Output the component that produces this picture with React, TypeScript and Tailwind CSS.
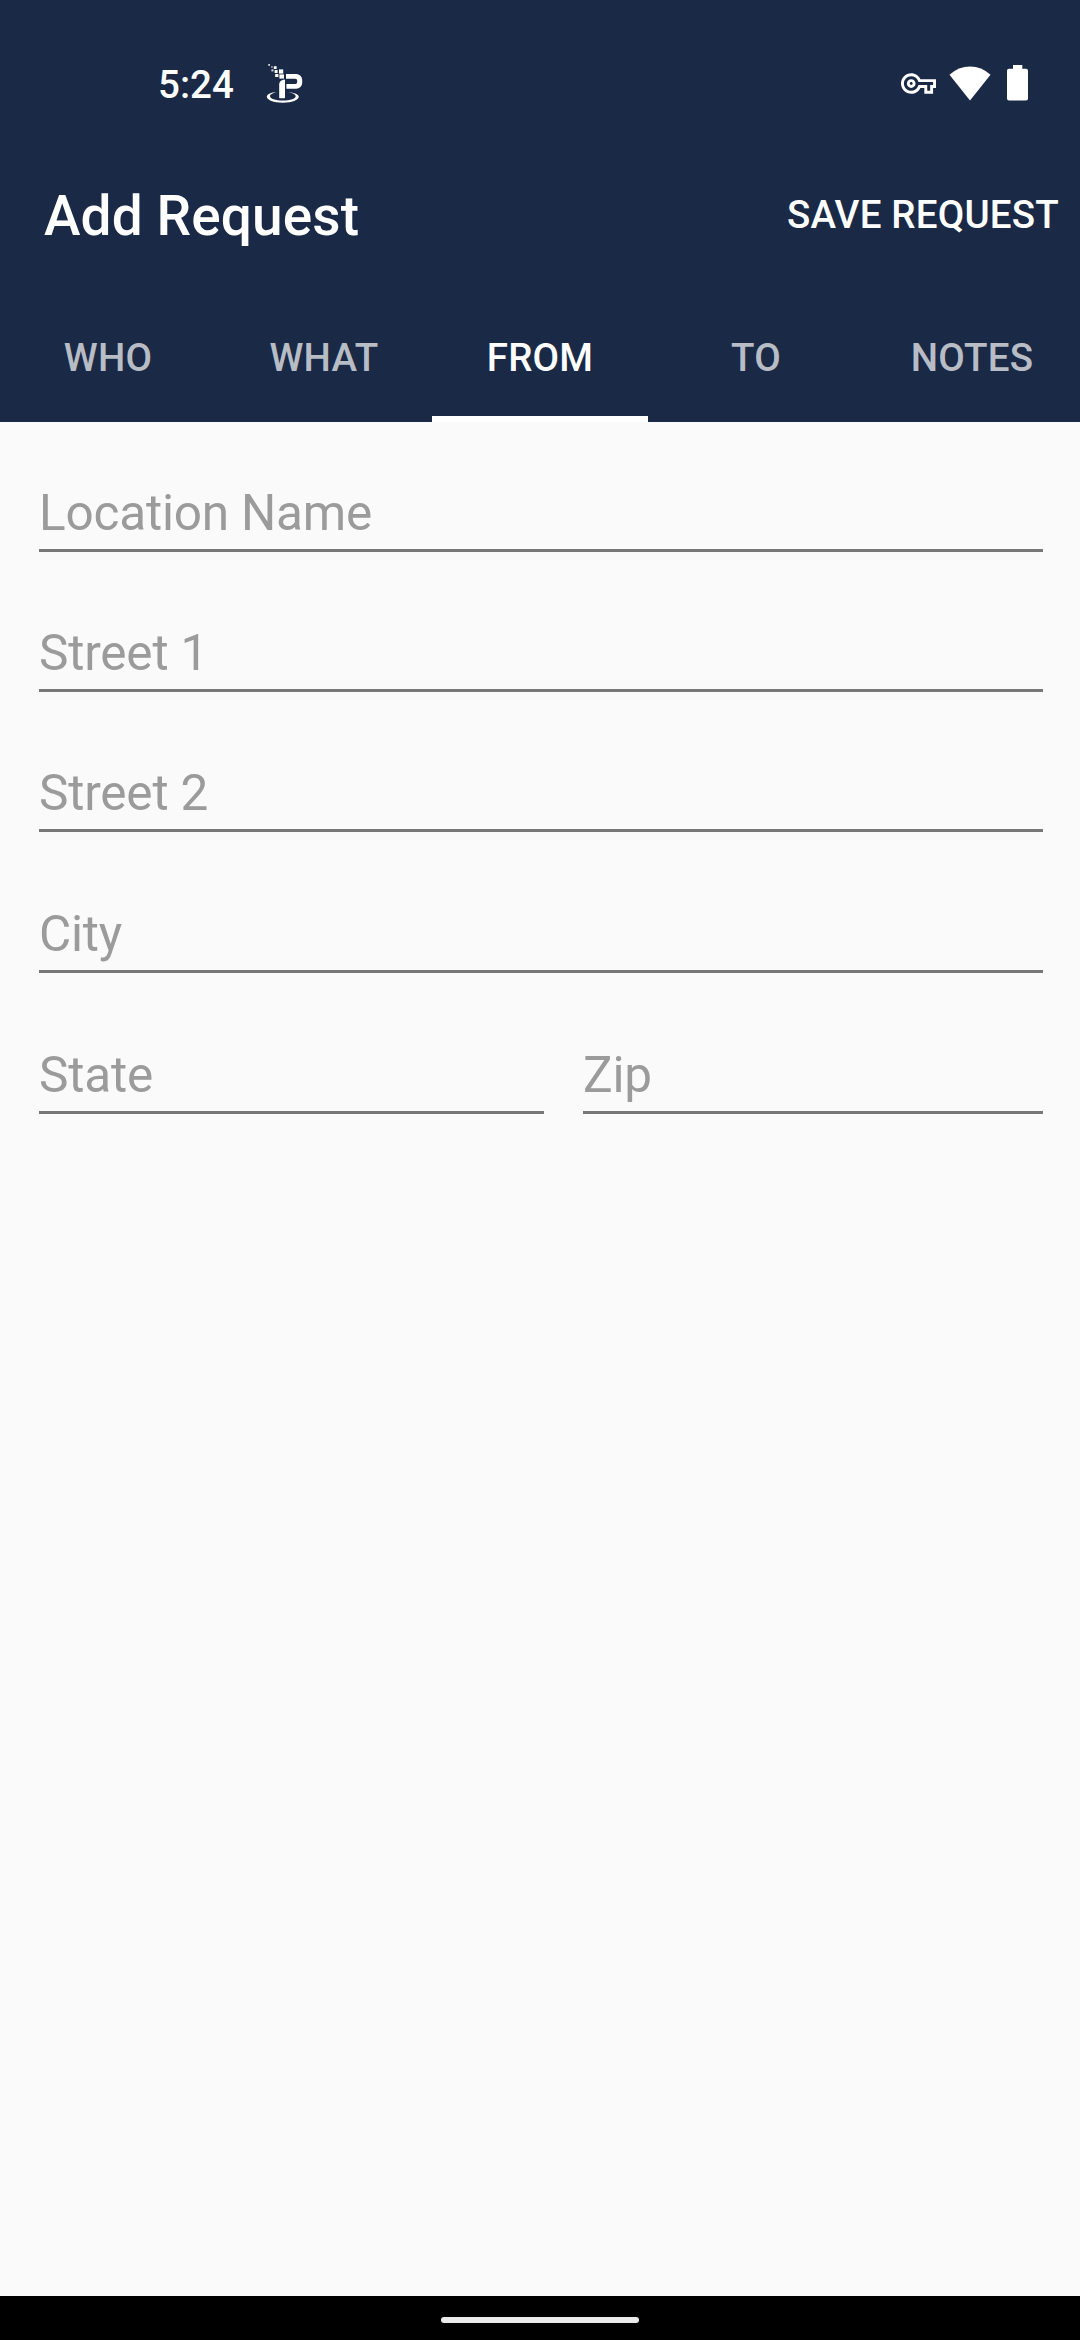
import { useState } from 'react';
import clsx from 'clsx';

const TABS = ['WHO', 'WHAT', 'FROM', 'TO', 'NOTES'];

function AppLogoIcon() {
  return (
    <svg width="38" height="42" viewBox="0 0 38 42" fill="white" className="shrink-0">
      <rect x="2.2" y="2" width="1.8" height="1.8" opacity="0.8" />
      <rect x="5" y="4" width="1.8" height="1.8" opacity="0.5" />
      <rect x="7.8" y="4.2" width="2.8" height="2.8" />
      <rect x="5.4" y="7.4" width="2" height="2" opacity="0.85" />
      <rect x="8.6" y="8" width="3" height="3" />
      <rect x="13" y="7.4" width="4.2" height="4.2" />
      <rect x="9.2" y="12" width="3.2" height="3" />
      <rect x="13.4" y="12.4" width="4.6" height="4.2" />
      <path d="M20 12h10.200a6 6 0 0 1 6 6v2.800a6 6 0 0 1-6 6H20.400v-4.800H29.200a2 2 0 0 0 2-2v-1.200a2 2 0 0 0-2-2H20z" />
      <path d="M13.200 22.500q0-4.500 5.800-5V36q-2.900.6-5.800 0z" />
      <path d="M11.500 30C4.500 30.500.8 32.400.8 34.800c0 3.300 7 5.900 16 5.900s16-2.600 16-5.900c0-2.400-4-4.400-11.400-4.900 5 .9 8.300 2.400 8.300 4.300 0 2.400-5.400 4.300-12.800 4.300S4 36.600 4 34.200c0-1.900 3-3.400 7.500-4.200z" />
    </svg>
  );
}

function StatusBar() {
  return (
    <div className="flex h-[136px] items-start justify-between pt-[62px] pr-[52px] pl-[158px]">
      <div className="flex items-start">
        <span className="w-[108px] text-[38.5px] leading-[46px] font-medium">5:24</span>
        <AppLogoIcon />
      </div>
      <div className="flex h-[42px] items-center">
        <svg width="35" height="21" viewBox="0 5 24 14" fill="white" className="mr-[13px]">
          <path d="M22 19h-6v-4h-2.68c-1.14 2.42-3.6 4-6.32 4-3.86 0-7-3.14-7-7s3.14-7 7-7c2.72 0 5.17 1.58 6.32 4H24v6h-2v4zm-4-2h2v-4h2v-2H11.94l-.23-.67C11.01 8.34 9.11 7 7 7c-2.76 0-5 2.24-5 5s2.24 5 5 5c2.11 0 4.01-1.34 4.71-3.33l.23-.67H18v4zM7 15c-1.65 0-3-1.35-3-3s1.35-3 3-3 3 1.35 3 3-1.35 3-3 3zm0-4c-.55 0-1 .45-1 1s.45 1 1 1 1-.45 1-1-.45-1-1-1z" />
        </svg>
        <svg width="42" height="35" viewBox="0 0 42 35" fill="white" className="mr-4">
          <path d="M.5 8.800Q9.500.5 21 .5t20.500 8.300L21 34.500z" />
        </svg>
        <svg width="21" height="36" viewBox="0 0 21 36" fill="white">
          <path d="M6 0h9.300v3.800H19a2 2 0 0 1 2 2v27.800a2 2 0 0 1-2 2H2a2 2 0 0 1-2-2V5.800a2 2 0 0 1 2-2h4z" />
        </svg>
      </div>
    </div>
  );
}

interface FieldProps {
  label: string;
  className?: string;
}

function Field({ label, className }: FieldProps) {
  return (
    <input
      type="text"
      placeholder={label}
      aria-label={label}
      className={clsx(
        'h-[93px] min-w-0 rounded-none border-b-[3px] border-[#777777] bg-transparent pt-[18px] text-[49.5px] tracking-[-0.2px] text-black/87 outline-none placeholder:text-[#9b9b9b]',
        className,
      )}
    />
  );
}

export default function App() {
  const [active, setActive] = useState('FROM');

  return (
    <div className="flex h-[2340px] w-[1080px] flex-col overflow-hidden bg-[#fafafa] font-['Roboto',sans-serif]">
      <header className="h-[422px] shrink-0 bg-[#1a2946] text-white">
        <StatusBar />
        <div className="flex h-[154px] items-center justify-between pr-[21px] pl-11">
          <h1 className="pt-[6px] text-[55px] leading-[64px] font-medium tracking-[0.1px]">Add Request</h1>
          <button className="pt-[4px] text-[38.5px] leading-[46px] font-medium tracking-[0.2px]">SAVE REQUEST</button>
        </div>
        <nav className="grid h-[132px] grid-cols-5">
          {TABS.map((tab) => (
            <button
              key={tab}
              onClick={() => setActive(tab)}
              className={clsx(
                'border-b-[6px] pt-[10px] text-[38.5px] leading-[46px] font-medium tracking-[0.2px]',
                tab === active ? 'border-white text-white' : 'border-transparent text-white/70',
              )}
            >
              {tab}
            </button>
          ))}
        </nav>
      </header>

      <main className="flex flex-1 flex-col pt-[37px] pr-[37px] pl-[39px]">
        <Field label="Location Name" />
        <Field label="Street 1" className="mt-[47px]" />
        <Field label="Street 2" className="mt-[47px]" />
        <Field label="City" className="mt-12" />
        <div className="mt-12 flex gap-[39px]">
          <Field label="State" className="w-[505px]" />
          <Field label="Zip" className="flex-1" />
        </div>
      </main>

      <footer className="flex h-11 shrink-0 justify-center bg-black pt-[21px]">
        <div className="h-[6px] w-[198px] rounded-full bg-[#ebebeb]" />
      </footer>
    </div>
  );
}
